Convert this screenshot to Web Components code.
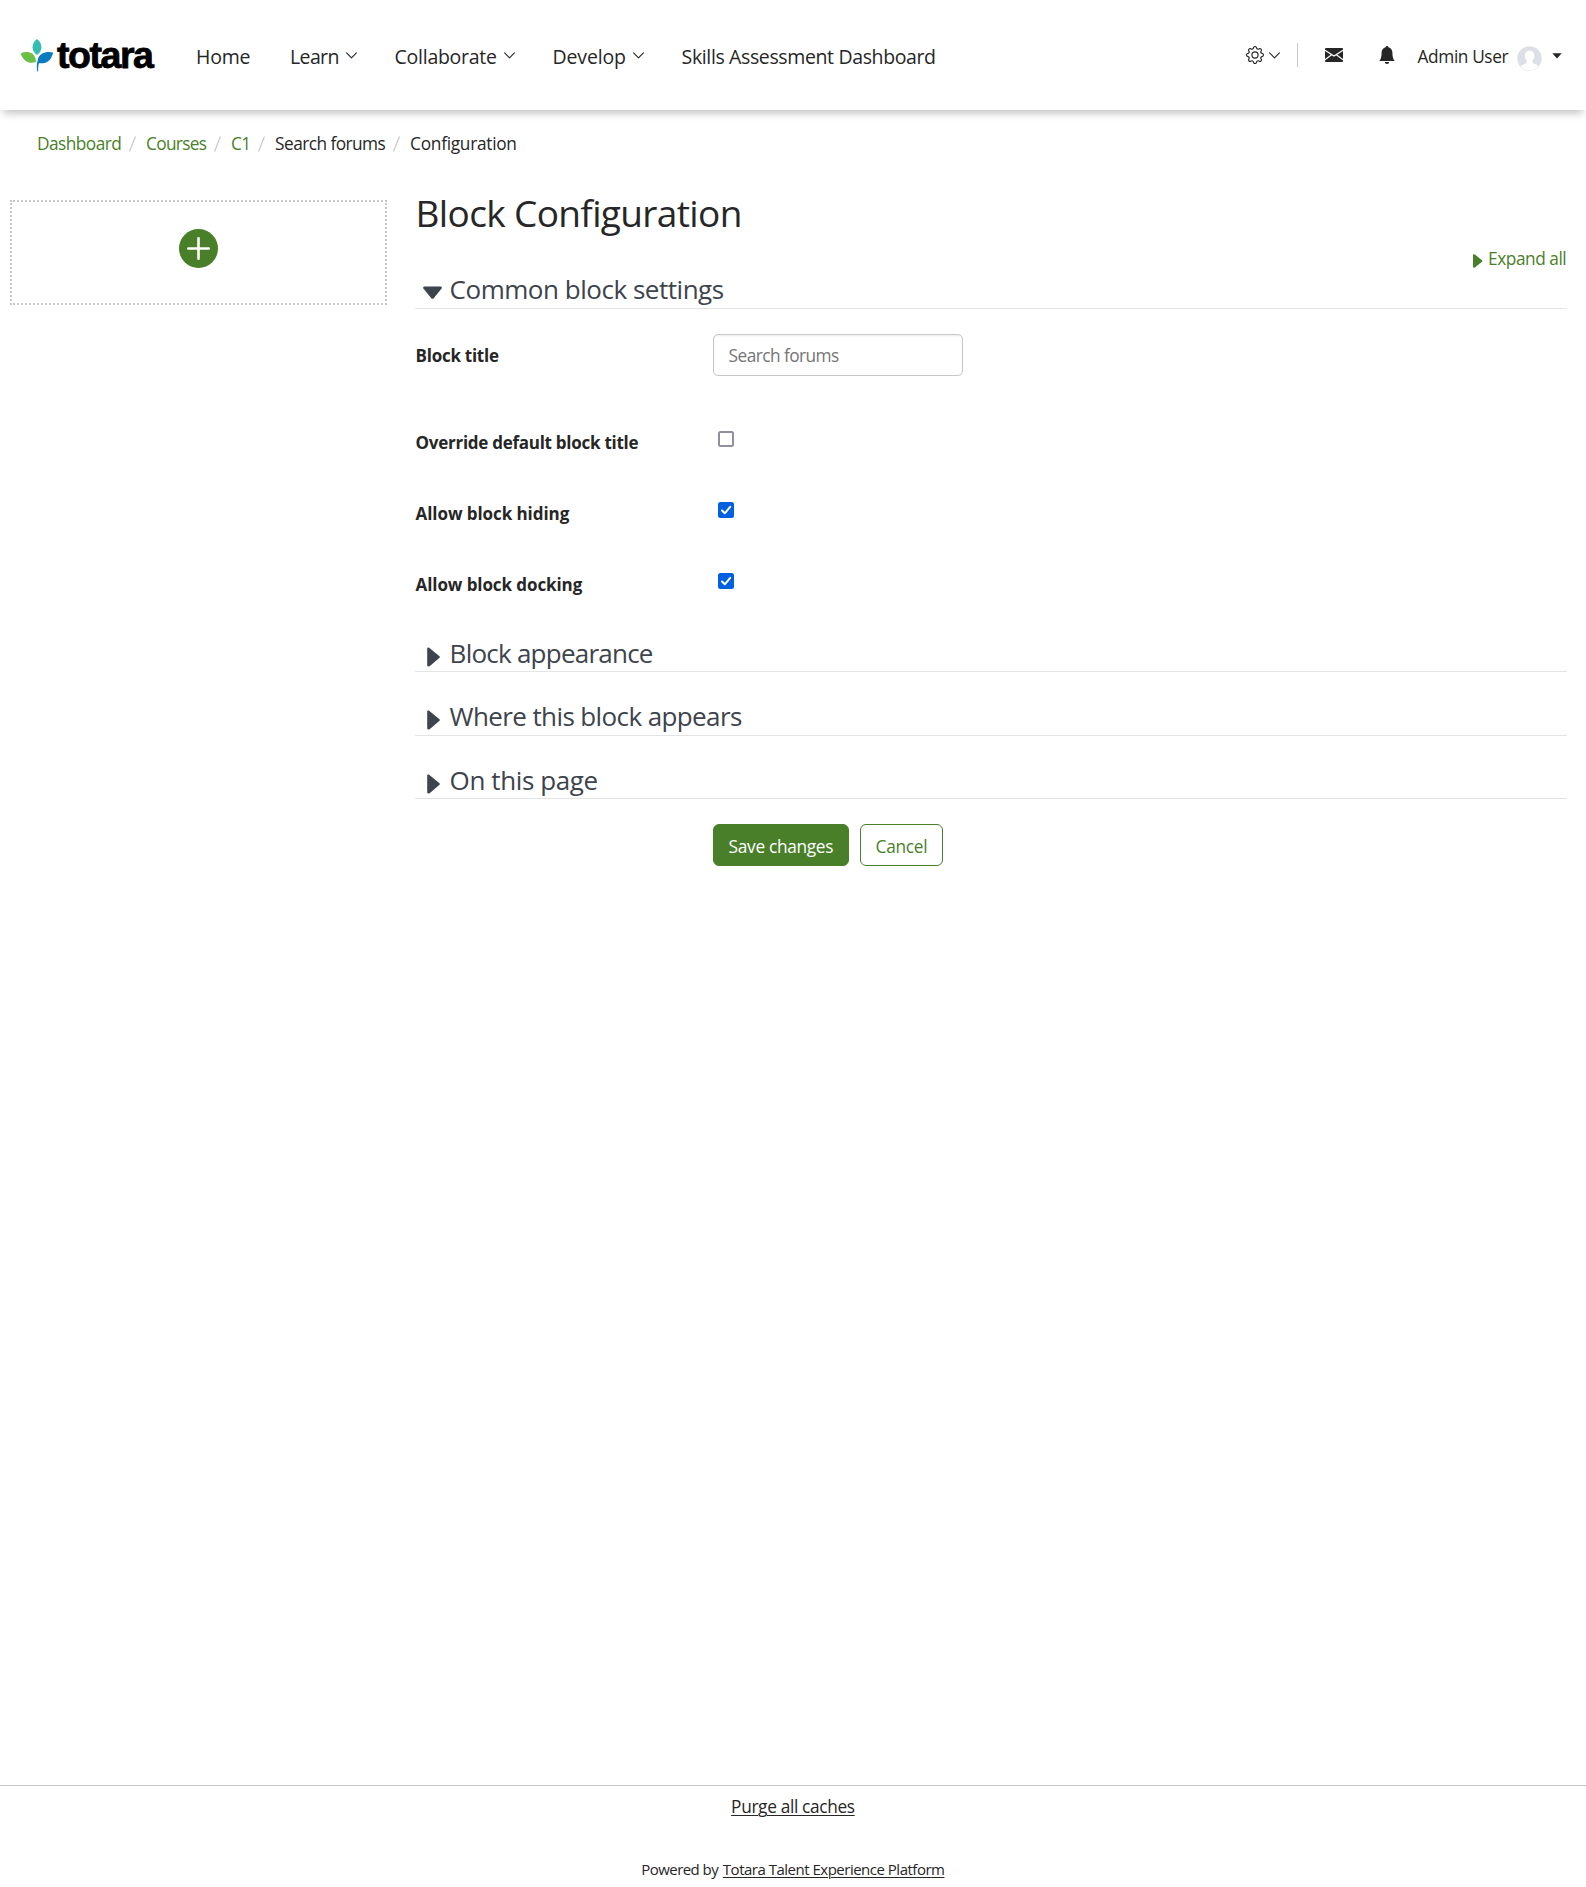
<!DOCTYPE html>
<html lang="en">
<head>
<meta charset="utf-8">
<title>Block Configuration</title>
<style>
  html, body { margin: 0; background: #fff; }
  body { font-family: "Open Sans", "Noto Sans", sans-serif; color: #262626; }
</style>
</head>
<body>
<totara-page></totara-page>
<script>
const define = (name, html, setup) => {
  const tpl = document.createElement('template');
  tpl.innerHTML = html;
  customElements.define(name, class extends HTMLElement {
    connectedCallback() {
      if (this.shadowRoot) return;
      this.attachShadow({ mode: 'open' }).appendChild(tpl.content.cloneNode(true));
      if (setup) setup(this, this.shadowRoot);
    }
  });
};

/* Single-line text, tracked so that it fills the width given in "w". */
define('ui-text', `
<style>
  :host { display: block; box-sizing: border-box; padding-left: .6px; white-space: nowrap; flex: none; line-height: 1; }
  span { display: inline-block; }
  :host([link]) span { display: inline; text-decoration: underline 1px; text-underline-offset: 2px; text-decoration-skip-ink: auto; }
</style><span><slot></slot></span>`, (el, root) => {
  const size = el.getAttribute('size');
  if (size) el.style.fontSize = size + 'px';
  const w = parseFloat(el.getAttribute('w'));
  const span = root.querySelector('span');
  const natural = span.getBoundingClientRect().width;
  el.style.letterSpacing = ((w - 1.4 - natural) / el.textContent.length).toFixed(4) + 'px';
  el.style.width = w + 'px';
});

define('ui-chevron', `
<style>:host{display:block;width:11px;height:7px;flex:none} svg{display:block}</style>
<svg width="11" height="7" viewBox="0 0 11 7" fill="none" stroke="#262626" stroke-width="1.1" stroke-linecap="round" stroke-linejoin="round"><path d="M.6.8 5.5 5.8 10.4.8"/></svg>`);

define('totara-logo', `
<style>
  :host { display: flex; align-items: flex-start; width: 136px; height: 34px; flex: none; }
  svg { display: block; flex: none; margin: -1px 3px 0 0; }
  b { font: 700 37.5px/34px "Liberation Sans", Arial, sans-serif; letter-spacing: -1.45px; color: #000; -webkit-text-stroke: .8px #000; margin-top: -2px; }
</style>
<svg width="34" height="34" viewBox="0 0 34 34">
  <path fill="#35bdb2" d="M17 0c3 2.300 4.400 5 4.400 8.200 0 3-1.300 5.700-4.400 7.800-3.100-2.100-4.400-4.800-4.400-7.800C12.600 5 14 2.300 17 0z"/>
  <path fill="#6cbf45" d="M.6 14.400c4.600-2 8.600-1.800 11.500.2 2.300 1.600 3.600 4.300 4 8.300-4.100 1.300-7.500 1-10.300-1C3.400 20.200 1.700 17.700.6 14.400z"/>
  <path fill="#0a7bbd" d="M33.200 13.400c-1 4-2.600 7-5 8.800-2.700 2-5.700 2.300-9.300 2-.7 2.500-.8 4.800-.7 8l-1 .2c-.6-4.600-.4-8 .4-11 .7-3.300 2.200-5.500 4.600-6.900 2.900-1.700 6.700-2 11-1.100z"/>
</svg><b>totara</b>`);

define('nav-item', `
<style>:host{display:flex;align-items:center} ui-chevron{display:none;margin-top:-3px} :host([menu]) ui-chevron{display:block;margin-left:6px;margin-right:.5px}</style>
<slot></slot><ui-chevron></ui-chevron>`);

define('user-tools', `
<style>
  :host { display: flex; align-items: center; }
  svg { display: block; flex: none; }
  .rule { width: 1px; height: 24px; background: #c7c7c7; margin-left: 17px; }
</style>
<svg width="18" height="18" viewBox="0 0 16 16" fill="#262626"><path d="M8 4.754a3.246 3.246 0 1 0 0 6.492 3.246 3.246 0 0 0 0-6.492zM5.754 8a2.246 2.246 0 1 1 4.492 0 2.246 2.246 0 0 1-4.492 0z"/><path d="M9.796 1.343c-.527-1.790-3.065-1.790-3.592 0l-.094.319a.873.873 0 0 1-1.255.52l-.292-.16c-1.640-.892-3.433.902-2.540 2.541l.159.292a.873.873 0 0 1-.52 1.255l-.319.094c-1.790.527-1.790 3.065 0 3.592l.319.094a.873.873 0 0 1 .52 1.255l-.16.292c-.892 1.640.901 3.434 2.541 2.540l.292-.159a.873.873 0 0 1 1.255.52l.094.319c.527 1.790 3.065 1.790 3.592 0l.094-.319a.873.873 0 0 1 1.255-.52l.292.16c1.640.893 3.434-.902 2.540-2.541l-.159-.292a.873.873 0 0 1 .52-1.255l.319-.094c1.790-.527 1.790-3.065 0-3.592l-.319-.094a.873.873 0 0 1-.52-1.255l.16-.292c.893-1.640-.902-3.433-2.541-2.540l-.292.159a.873.873 0 0 1-1.255-.52l-.094-.319zm-2.633.283c.246-.835 1.428-.835 1.674 0l.094.319a1.873 1.873 0 0 0 2.693 1.115l.291-.16c.764-.415 1.600.42 1.184 1.185l-.159.292a1.873 1.873 0 0 0 1.116 2.692l.318.094c.835.246.835 1.428 0 1.674l-.319.094a1.873 1.873 0 0 0-1.115 2.693l.16.291c.415.764-.42 1.600-1.185 1.184l-.291-.159a1.873 1.873 0 0 0-2.693 1.116l-.094.318c-.246.835-1.428.835-1.674 0l-.094-.319a1.873 1.873 0 0 0-2.692-1.115l-.292.16c-.764.415-1.600-.42-1.184-1.185l.159-.291A1.873 1.873 0 0 0 1.945 8.930l-.319-.094c-.835-.246-.835-1.428 0-1.674l.319-.094A1.873 1.873 0 0 0 3.060 4.377l-.16-.292c-.415-.764.42-1.600 1.185-1.184l.292.159a1.873 1.873 0 0 0 2.692-1.115l.094-.319z"/></svg>
<ui-chevron style="margin-left:5px;margin-top:1px"></ui-chevron>
<div class="rule"></div>
<svg style="margin-left:27px" width="18" height="14" viewBox="0 0 18 14"><rect width="18" height="14" rx="1" fill="#262626"/><path d="M0 2.300 9 8 18 2.300M0 11.700 6.600 6.800M18 11.700 11.400 6.800" fill="none" stroke="#fff" stroke-width="1.100"/></svg>
<svg style="margin-left:36px" width="16" height="18" viewBox="0 0 16 18" fill="#262626"><path d="M8 0c.8 0 1.400.6 1.400 1.300 2.500.6 4 2.700 4 5.300 0 4 .6 6.600 2.300 8.400H.3c1.700-1.800 2.300-4.400 2.300-8.400 0-2.600 1.500-4.700 4-5.300C6.600.6 7.200 0 8 0zM5.800 16h4.400c0 1.100-1 2-2.200 2s-2.200-.9-2.200-2z"/></svg>
<ui-text style="margin:4px 0 0 22.500px" size="17.3" w="92">Admin User</ui-text>
<svg style="margin:7px 0 0 8px" width="25" height="25" viewBox="0 0 25 25"><defs><clipPath id="c"><circle cx="12.500" cy="12.500" r="11.900"/></clipPath></defs><circle cx="12.500" cy="12.500" r="12.200" fill="#dcdfe5"/><g clip-path="url(#c)"><path fill="#fff" d="M12.600 4.800c3 0 4.800 2.100 4.800 5 0 2-.8 3.700-1.900 4.800v2c.5 1.300 3.900 1.700 5.700 3.200.8.7 1.200 1.700 1.200 5.200H2.800c0-3.500.4-4.500 1.200-5.200 1.800-1.500 5.200-1.900 5.700-3.200v-2c-1.200-1.100-1.900-2.800-1.900-4.800 0-2.900 1.800-5 4.800-5z"/></g></svg>
<svg style="margin:1px 0 0 10px" width="10" height="6" viewBox="0 0 10 6"><path fill="#262626" d="M.3.2h9.400L5 5.400z"/></svg>`);

define('site-header', `
<style>
  :host { display: flex; box-sizing: border-box; height: 110px; padding: 0 24px 0 20px; background: #fff; align-items: center; box-shadow: 0 6px 8px -3px rgba(0,0,0,.25); }
  nav { display: flex; align-items: center; padding-top: 4px; margin-left: 39.500px; }
  user-tools { margin-left: auto; }
  totara-logo { margin-top: 3px; }
</style>
<totara-logo></totara-logo>
<nav>
  <nav-item><ui-text size="19.5" w="55.500">Home</ui-text></nav-item>
  <nav-item menu style="margin-left:38.500px"><ui-text size="19.5" w="50">Learn</ui-text></nav-item>
  <nav-item menu style="margin-left:37px"><ui-text size="19.5" w="103.500">Collaborate</ui-text></nav-item>
  <nav-item menu style="margin-left:37px"><ui-text size="19.5" w="74.500">Develop</ui-text></nav-item>
  <nav-item style="margin-left:37px"><ui-text size="19.5" w="255.500">Skills Assessment Dashboard</ui-text></nav-item>
</nav>
<user-tools></user-tools>`);

define('crumb-trail', `
<style>
  :host { display: flex; align-items: center; box-sizing: border-box; height: 66px; padding: 2px 0 0 36.500px; }
  .g { color: #4a7f2a; }
  svg { display: block; margin: 0 10px 0 6.500px; flex: none; }
</style>
<ui-text class="g" size="17.3" w="85.500">Dashboard</ui-text><svg width="7" height="16"><path d="M.6 15.500 6.400.5" stroke="#c7c7c7" stroke-width="1.200"/></svg>
<ui-text class="g" size="17.3" w="61.500">Courses</ui-text><svg width="7" height="16"><path d="M.6 15.500 6.400.5" stroke="#c7c7c7" stroke-width="1.200"/></svg>
<ui-text class="g" size="17.3" w="20.500">C1</ui-text><svg width="7" height="16"><path d="M.6 15.500 6.400.5" stroke="#c7c7c7" stroke-width="1.200"/></svg>
<ui-text size="17.3" w="111.500">Search forums</ui-text><svg width="7" height="16"><path d="M.6 15.500 6.400.5" stroke="#c7c7c7" stroke-width="1.200"/></svg>
<ui-text size="17.3" w="108">Configuration</ui-text>`);

define('add-block', `
<style>
  :host { display: flex; box-sizing: border-box; width: 377px; height: 105px; border: 2px dotted #c7c7c7; justify-content: center; align-items: flex-start; padding-top: 27px; }
  svg { display: block; }
</style>
<svg width="39" height="39" viewBox="0 0 39 39"><circle cx="19.500" cy="19.500" r="19.500" fill="#4a7f2a"/><path d="M19.500 9.300v20.400M9.300 19.500h20.400" stroke="#fff" stroke-width="2.600" stroke-linecap="round"/></svg>`);

define('form-section', `
<style>
  :host { display: flex; box-sizing: border-box; height: 38px; align-items: center; padding: 1px 0 0 8px; border-bottom: 1px solid #e2e4e6; color: #3d444c; }
  svg { display: block; width: 19px; height: 20px; margin: 8px 7px 0 0; flex: none; fill: currentColor; }
  .open { display: none; margin-top: 7px; }
  :host([open]) .open { display: block; }
  :host([open]) .shut { display: none; }
</style>
<svg class="shut" viewBox="0 0 19 20"><path d="M4.200 1.500q0-1.500 1.600-.9L16.500 9.200q.9.800 0 1.600L7.500 18.600Q6.500 19.500 5.500 19.500q-1.300 0-1.300-1.200z"/></svg>
<svg class="open" viewBox="0 0 19 20"><path d="M1.500 3.500h16q1.600 0 1.300 1.500-.1.700-.8 1.300L10.500 15.400q-1 .9-2 0L1 6.300Q.3 5.700.2 5-.1 3.500 1.500 3.500z"/></svg>
<slot></slot>`);

define('form-row', `
<style>
  :host { display: grid; grid-template-columns: 298px 1fr; align-items: center; height: 71px; }
  ::slotted([slot=label]) { font-weight: 700; }
</style>
<slot name="label"></slot><div><slot></slot></div>`);

define('check-box', `
<style>
  :host { display: block; box-sizing: border-box; width: 16px; height: 16px; margin: 0 0 7px 5px; border: 2px solid #8f8f9d; border-radius: 2.500px; background: #fff; }
  svg { display: none; }
  :host([checked]) { border: 0; background: #0060df; }
  :host([checked]) svg { display: block; }
</style>
<svg width="16" height="16" viewBox="0 0 16 16" fill="none" stroke="#fff" stroke-width="2" stroke-linecap="round" stroke-linejoin="round"><path d="M4 8.500 6.800 11.300 12.200 4.800"/></svg>`);

define('text-field', `
<style>
  :host { display: flex; box-sizing: border-box; align-items: center; width: 250px; height: 42px; padding: 2px 0 0 14px; border: 1px solid #c7c7c7; border-radius: 5px; box-shadow: inset 0 1px 2px rgba(0,0,0,.08); color: #757575; }
</style><slot></slot>`);

define('ui-button', `
<style>
  :host { display: flex; box-sizing: border-box; align-items: center; justify-content: center; height: 42px; padding-top: 4px; border: 1px solid #4a7f2a; border-radius: 6px; color: #4a7f2a; background: #fff; }
  :host([primary]) { background: #4a7f2a; color: #fff; }
</style><slot></slot>`);

define('block-form', `
<style>
  :host { display: block; width: 1152px; }
  .title { height: 74px; display: flex; align-items: center; box-sizing: border-box; padding-bottom: 2px; }
  .expand { height: 16px; display: flex; align-items: center; justify-content: flex-end; box-sizing: border-box; padding-top: 2px; color: #4a7f2a; }
  .expand svg { display: block; margin: 3px 4.500px 0 0; }
  .buttons { display: flex; gap: 11px; margin: 25px 0 0 298px; }
</style>
<div class="title"><ui-text size="37" w="327.500">Block Configuration</ui-text></div>
<div class="expand"><svg width="10" height="14" viewBox="0 0 10 14"><path fill="currentColor" d="M0 1.200Q0 0 1.300.3 2 .5 2.500 1L9 6.300q.8.700 0 1.400L2.500 13q-.5.500-.9.700Q0 14 0 12.800z"/></svg><ui-text size="17.3" w="79.500">Expand all</ui-text></div>
<form-section open style="height:43px;padding-top:4px"><ui-text size="26" w="275.500">Common block settings</ui-text></form-section>
<form-row style="height:42px;margin:25px 0 31px"><ui-text slot="label" size="17" w="84.500">Block title</ui-text><text-field><ui-text size="17.3" w="111.500">Search forums</ui-text></text-field></form-row>
<form-row><ui-text slot="label" size="17" w="224">Override default block title</ui-text><check-box style="margin-bottom:8px"></check-box></form-row>
<form-row><ui-text slot="label" size="17" w="155">Allow block hiding</ui-text><check-box checked></check-box></form-row>
<form-row><ui-text slot="label" size="17" w="168">Allow block docking</ui-text><check-box checked></check-box></form-row>
<form-section style="margin-top:14px"><ui-text size="26" w="204.500">Block appearance</ui-text></form-section>
<form-section style="margin-top:25px;height:39px;padding:0 0 0 8px"><ui-text size="26" w="293.500">Where this block appears</ui-text></form-section>
<form-section style="margin-top:25px"><ui-text size="26" w="149.500">On this page</ui-text></form-section>
<div class="buttons"><ui-button primary style="width:136px"><ui-text size="17.3" w="106">Save changes</ui-text></ui-button><ui-button style="width:83px"><ui-text size="17.3" w="53">Cancel</ui-text></ui-button></div>`);

define('site-footer', `
<style>
  :host { display: flex; flex-direction: column; align-items: center; box-sizing: border-box; height: 102px; border-top: 1px solid #c7c7c7; }
  .a { display: flex; height: 42px; align-items: center; }
  .b { display: flex; height: 18px; align-items: center; margin-top: 32px; }
</style>
<div class="a"><ui-text link size="17.3" w="125">Purge all caches</ui-text></div>
<div class="b"><ui-text size="15" w="81.500">Powered by&nbsp;</ui-text><ui-text link size="15" w="223">Totara Talent Experience Platform</ui-text></div>`);

define('totara-page', `
<style>
  :host { display: flex; flex-direction: column; height: 1887px; width: 100%; overflow: hidden; }
  main { display: flex; flex: 1; padding-left: 10px; gap: 28px; align-items: flex-start; }
  add-block { margin-top: 24px; }
</style>
<site-header></site-header>
<crumb-trail></crumb-trail>
<main><add-block></add-block><block-form></block-form></main>
<site-footer></site-footer>`);
</script>
</body>
</html>
